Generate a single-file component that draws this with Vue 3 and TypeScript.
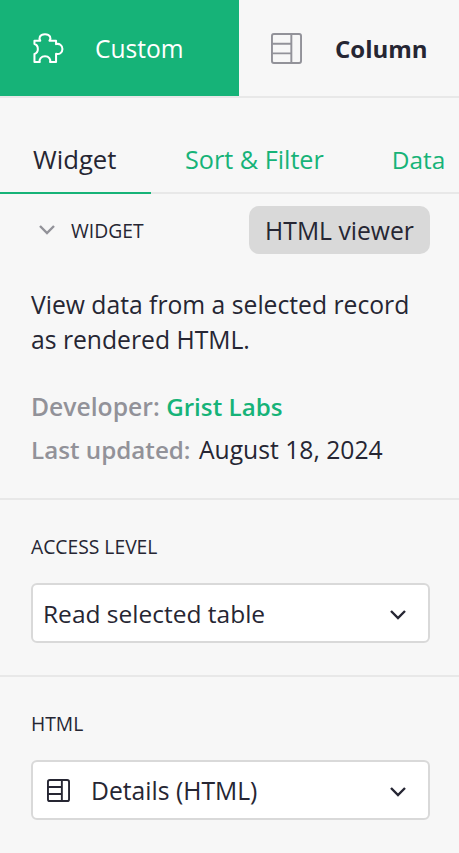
<script setup lang="ts">
const tabs: string[] = ['Sort & Filter', 'Data']
</script>

<template>
  <div class="panel">
    <header class="top">
      <div class="top-tab active">
        <svg class="top-icon" viewBox="0 0 32 32" fill="none" stroke="#fff" stroke-width="2.1" stroke-linejoin="round">
          <path d="M1.5 8 H7.5 C6 5.5 6.5 1.2 12.4 1.2 C18 1.2 19 5.5 17 8 H23.8 V11.5 C27 10.5 30.4 12.5 30.4 16.5 C30.4 20.5 27 22.5 23.8 21.5 V30 H17.6 C18.5 27 16.5 24 12.4 24 C8.5 24 6 27 7 30 H1.5 V21.7 C3.5 21 5 19 5 16.5 C5 14 3.5 12 1.5 11.4 Z" />
        </svg>
        <span class="custom">Custom</span>
      </div>
      <div class="top-tab">
        <svg class="top-icon col" viewBox="0 0 32 32" fill="none" stroke="#929299" stroke-width="2">
          <rect x="1" y="1" width="30" height="30" rx="2" />
          <path d="M21 1 V31 M1 11 H21 M1 21 H21" />
        </svg>
        <span class="bold">Column</span>
      </div>
    </header>

    <nav class="subtabs">
      <div class="subtab current">Widget</div>
      <div v-for="t in tabs" :key="t" class="subtab">{{ t }}</div>
    </nav>

    <section class="widget">
      <div class="widget-head">
        <svg class="caret" viewBox="0 0 16 10" fill="none" stroke="#929299" stroke-width="2.4">
          <path d="M1 1 L8 8 L15 1" />
        </svg>
        <span class="label head-label">WIDGET</span>
        <span class="pill">HTML viewer</span>
      </div>
      <p class="desc">View data from a selected record as rendered HTML.</p>
      <div class="meta dev"><b>Developer:</b> <a>Grist Labs</a></div>
      <div class="meta"><b>Last updated:</b> <span class="date">August 18, 2024</span></div>
    </section>

    <section class="block">
      <div class="label">ACCESS LEVEL</div>
      <div class="select">
        <span class="value read">Read selected table</span>
        <svg class="chev" viewBox="0 0 16 10" fill="none" stroke="#262633" stroke-width="2.4">
          <path d="M1 1 L8 8 L15 1" />
        </svg>
      </div>
    </section>

    <section class="block last">
      <div class="label">HTML</div>
      <div class="select">
        <svg class="row-icon" viewBox="0 0 24 24" fill="none" stroke="#262633" stroke-width="2">
          <rect x="1" y="1" width="22" height="22" rx="2" />
          <path d="M15.5 1 V23 M1 8.3 H15.5 M1 15.7 H15.5" />
        </svg>
        <span class="value">Details (HTML)</span>
        <svg class="chev" viewBox="0 0 16 10" fill="none" stroke="#262633" stroke-width="2.4">
          <path d="M1 1 L8 8 L15 1" />
        </svg>
      </div>
    </section>
  </div>
</template>

<style>
html, body { margin: 0; background: #f7f7f7; }
</style>

<style scoped>
.panel {
  width: 459px;
  height: 853px;
  overflow: hidden;
  background: #f7f7f7;
  color: #262633;
  font-family: "Open Sans", "Noto Sans", sans-serif;
  font-size: 24.7px;
}
.top {
  display: flex;
  height: 96px;
  border-bottom: 2px solid #e8e8e8;
}
.top-tab {
  display: flex;
  align-items: center;
  gap: 31px;
  padding-left: 33px;
  width: 239px;
  box-sizing: border-box;
}
.top-tab.active {
  background: #16b378;
  color: #fff;
}
.top-tab + .top-tab {
  gap: 33px;
  padding-left: 32px;
  width: 220px;
}
.top-icon { width: 31px; height: 31px; flex: none; }
.custom { font-size: 24.6px; padding-top: 1px; }
.bold { font-weight: 700; font-size: 24px; padding-top: 1px; }
.subtabs {
  display: flex;
  height: 94px;
  border-bottom: 2px solid #e8e8e8;
}
.subtab {
  display: flex;
  flex: none;
  align-items: flex-end;
  padding: 0 34px 16px;
  color: #16b378;
  white-space: nowrap;
  font-size: 25.2px;
}
.subtab:last-child { font-size: 24.4px; }
.subtab.current {
  width: 151px;
  box-sizing: border-box;
  padding: 0 0 15px 33px;
  color: #262633;
  border-bottom: 2px solid #16b378;
  margin-bottom: -2px;
  font-size: 25.7px;
}
.widget { padding: 12px 29px 27px 31px; border-bottom: 2px solid #e8e8e8; }
.widget-head { display: flex; align-items: center; height: 48px; }
.caret { width: 16px; height: 10px; margin: 0 16px 0 8px; }
.label { font-size: 19.3px; line-height: 24px; }
.head-label { padding-top: 2px; }
.pill {
  margin-left: auto;
  width: 181px;
  height: 48px;
  border-radius: 10px;
  background: #d9d9d9;
  display: flex;
  align-items: center;
  justify-content: center;
  white-space: nowrap;
  box-sizing: border-box;
}
.desc { margin: 33px 0 0; line-height: 35px; }
.meta { line-height: 43px; white-space: nowrap; }
.meta.dev { margin-top: 28px; }
.meta b { color: #929299; font-weight: 600; font-size: 24.2px; }
.meta.dev b { font-size: 24.7px; }
.meta a { color: #16b378; font-weight: 600; font-size: 24.2px; }
.date { font-size: 24.7px; margin-left: 2px; }
.block { padding: 35px 29px 32px 31px; border-bottom: 2px solid #e8e8e8; }
.block.last { border-bottom: none; }
.select {
  margin-top: 24px;
  height: 60px;
  box-sizing: border-box;
  border: 2px solid #d9d9d9;
  border-radius: 6px;
  background: #fff;
  display: flex;
  align-items: center;
  padding: 0 22px 0 10px;
}
.row-icon { width: 23px; height: 23px; margin: 0 21px 0 4px; flex: none; }
.value { white-space: nowrap; }
.value.read { font-size: 24.5px; }
.chev { width: 16px; height: 10px; margin: 4px 0 0 auto; }
</style>
